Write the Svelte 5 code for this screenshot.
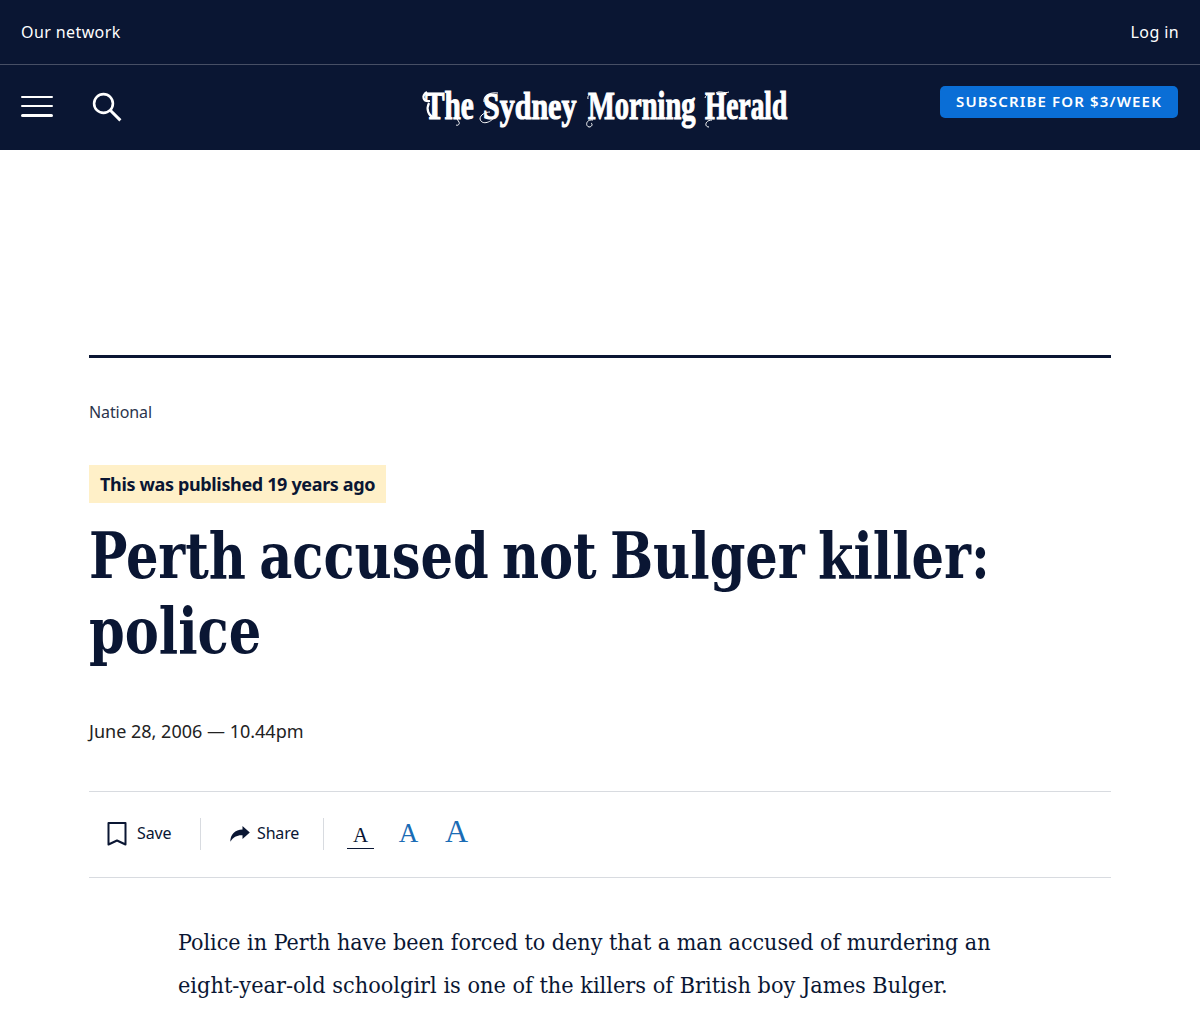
<script lang="ts">
	const masthead = [
		{ word: 'The', x: 3, scale: 0.75 },
		{ word: 'Sydney', x: 61, scale: 0.77 },
		{ word: 'Morning', x: 166, scale: 0.73 },
		{ word: 'Herald', x: 283, scale: 0.703 },
	];

	const sizes = ['small', 'medium', 'large'];
	let textSize = $state('small');
</script>

<header class="site-header">
	<div class="top-bar">
		<button class="network">Our network</button>
		<button class="login">Log in</button>
	</div>
	<div class="nav-bar">
		<div class="nav-tools">
			<button class="menu" aria-label="Menu">
				<svg width="32" height="22" viewBox="0 0 32 22" fill="none" stroke="#fff" stroke-linecap="round">
					<path d="M1 1h30M1 10h30" stroke-width="2" />
					<path d="M1.5 19.500h29" stroke-width="3" />
				</svg>
			</button>
			<button class="search" aria-label="Search">
				<svg width="30" height="30" viewBox="0 0 30 30" fill="none" stroke="#fff">
					<circle cx="11.5" cy="11.5" r="9.4" stroke-width="2.6" />
					<path d="M18 18l10.4 10.4" stroke-width="3" />
				</svg>
			</button>
		</div>
		<svg class="masthead" width="368" height="44" viewBox="0 0 368 44">
			{#each masthead as part}
				<text transform="translate({part.x} 33) scale({part.scale} 1)">{part.word}</text>
			{/each}
			<g class="flourish">
				<path d="M5 6c-6 4-4 10 3 9M7 17c-3 6-1 13 6 15" stroke-width="2.2" />
				<path d="M35 33l2 3c1 2-1 4-3 3" />
				<path d="M58 33c2 7 12 3 15-3M58 33c0-4 5-7 10-7M62 16c-1-7 6-10 14-9" />
				<path d="M166 13c-1-4 3-6 7-5M171 34c-7-1-8 6-4 7c3 0 4-3 2-4" />
				<path d="M283 12c1-4 5-5 9-4M294 7c4-3 8 1 13-1M290 34c-7 0-8 7-3 7" />
			</g>
		</svg>
		<button class="subscribe">SUBSCRIBE FOR $3/WEEK</button>
	</div>
</header>

<main class="article">
	<div class="section">National</div>
	<div class="age-notice"><span>This was published 19 years ago</span></div>
	<h1>Perth accused not Bulger killer:<br />police</h1>
	<time>June 28, 2006 — 10.44pm</time>

	<div class="actions">
		<button class="save">
			<svg width="20" height="25" viewBox="0 0 20 25" fill="none" stroke="#0a1633" stroke-width="2">
				<path d="M1.5 2h17v21.500L10 19.500l-8.500 4z" stroke-linejoin="round" />
			</svg>
			<span>Save</span>
		</button>
		<button class="share">
			<svg width="20" height="16" viewBox="0 0 20 16" fill="#0a1633">
				<path d="M12.500 0L19.800 6.500L12.500 13V9.300C7 9 3.500 11 .3 15.800C.3 8.500 5 3.800 12.500 3.500z" />
			</svg>
			<span>Share</span>
		</button>
		<div class="text-sizes">
			{#each sizes as size}
				<button
					class={size}
					class:active={textSize === size}
					aria-label="Text size {size}"
					onclick={() => (textSize = size)}>A</button
				>
			{/each}
		</div>
	</div>

	<p class="body">
		<span class="line first">Police in Perth have been forced to deny that a man accused of murdering an</span>
		<span class="line">eight-year-old schoolgirl is one of the killers of British boy James Bulger.</span>
	</p>
</main>

<style>
	:global(body) {
		background: #fff;
		color: #0a1633;
		font-family: 'Noto Sans', 'Open Sans', sans-serif;
	}

	button {
		padding: 0;
		border: 0;
		background: none;
		color: inherit;
		font: inherit;
		letter-spacing: inherit;
		white-space: nowrap;
		cursor: pointer;
	}

	svg {
		display: block;
	}

	.site-header {
		height: 150px;
		background: #0a1633;
		color: #fff;
	}

	.top-bar {
		display: flex;
		align-items: center;
		justify-content: space-between;
		box-sizing: border-box;
		height: 65px;
		padding: 0 21px;
		border-bottom: 1px solid #474f65;
		font-size: 16px;
		letter-spacing: 0.4px;
	}

	.nav-bar {
		display: grid;
		grid-template-columns: 401px 368px 1fr;
		align-items: start;
		padding: 21px 22px 0 21px;
	}

	.nav-tools {
		display: flex;
		align-items: start;
		gap: 39px;
		padding-top: 6px;
	}

	.menu {
		padding-top: 4px;
	}

	.masthead {
		overflow: visible;
	}

	.masthead text {
		fill: #fff;
		stroke: #fff;
		stroke-width: 1.1;
		font-family: 'Liberation Serif', serif;
		font-size: 39px;
		font-weight: 700;
	}

	.flourish {
		fill: none;
		stroke: #fff;
		stroke-width: 1;
	}

	.subscribe {
		justify-self: end;
		width: 238px;
		height: 32px;
		padding-bottom: 2px;
		border-radius: 5px;
		background: #0a6ed6;
		font-size: 15px;
		font-weight: 600;
		letter-spacing: 1.15px;
	}

	.article {
		margin: 205px 89px 0;
		border-top: 3px solid #0a1633;
	}

	.section {
		margin-top: 42px;
		color: #2b344c;
		font-size: 16px;
		letter-spacing: -0.1px;
		line-height: 24px;
	}

	.age-notice {
		display: flex;
		margin-top: 41px;
	}

	.age-notice span {
		box-sizing: border-box;
		width: 297px;
		height: 38px;
		padding-left: 11px;
		background: #fff0c8;
		font-size: 18px;
		font-weight: 700;
		letter-spacing: -0.35px;
		line-height: 38px;
		white-space: nowrap;
	}

	h1 {
		margin: 16px 0 0;
		font-family: 'DejaVu Serif Condensed', 'DejaVu Serif', serif;
		font-size: 63px;
		font-weight: 700;
		line-height: 75px;
		word-spacing: -5px;
		white-space: nowrap;
		transform: scaleX(0.901);
		transform-origin: left;
	}

	time {
		display: block;
		margin-top: 48px;
		color: #222;
		font-size: 18px;
		line-height: 28px;
	}

	.actions {
		display: flex;
		align-items: center;
		box-sizing: border-box;
		height: 87px;
		margin-top: 46px;
		padding-bottom: 2px;
		border: solid #d8dbe0;
		border-width: 1px 0;
		font-size: 16px;
		letter-spacing: -0.15px;
	}

	.save,
	.share {
		display: flex;
		align-items: center;
		box-sizing: border-box;
		height: 32px;
		border-right: 1px solid #d8dbe0;
	}

	.save {
		gap: 10px;
		width: 112px;
		padding-left: 18px;
	}

	.share {
		gap: 7px;
		width: 123px;
		padding-left: 29px;
	}

	.save span,
	.share span {
		padding-bottom: 2px;
	}

	.text-sizes {
		display: flex;
		align-items: baseline;
		padding: 1px 0 0 23px;
		color: #1a6cb5;
		font-family: 'Liberation Serif', serif;
	}

	.text-sizes button {
		width: 27px;
		margin-right: 21px;
		line-height: 25px;
	}

	.small {
		font-size: 21px;
	}

	.medium {
		font-size: 27px;
	}

	.large {
		font-size: 32px;
	}

	.active {
		border-bottom: 1px solid #0a1633;
		color: #0a1633;
	}

	.body {
		margin: 43px 0 0 89px;
		font-family: 'DejaVu Serif Condensed', 'DejaVu Serif', serif;
		font-size: 22px;
		line-height: 43px;
	}

	.line {
		display: block;
		white-space: nowrap;
		transform: scaleX(1.056);
		transform-origin: left;
	}

	.first {
		width: 776px;
		transform: scaleX(1.046);
	}

	.line:not(.first) {
		width: 728px;
	}
</style>
